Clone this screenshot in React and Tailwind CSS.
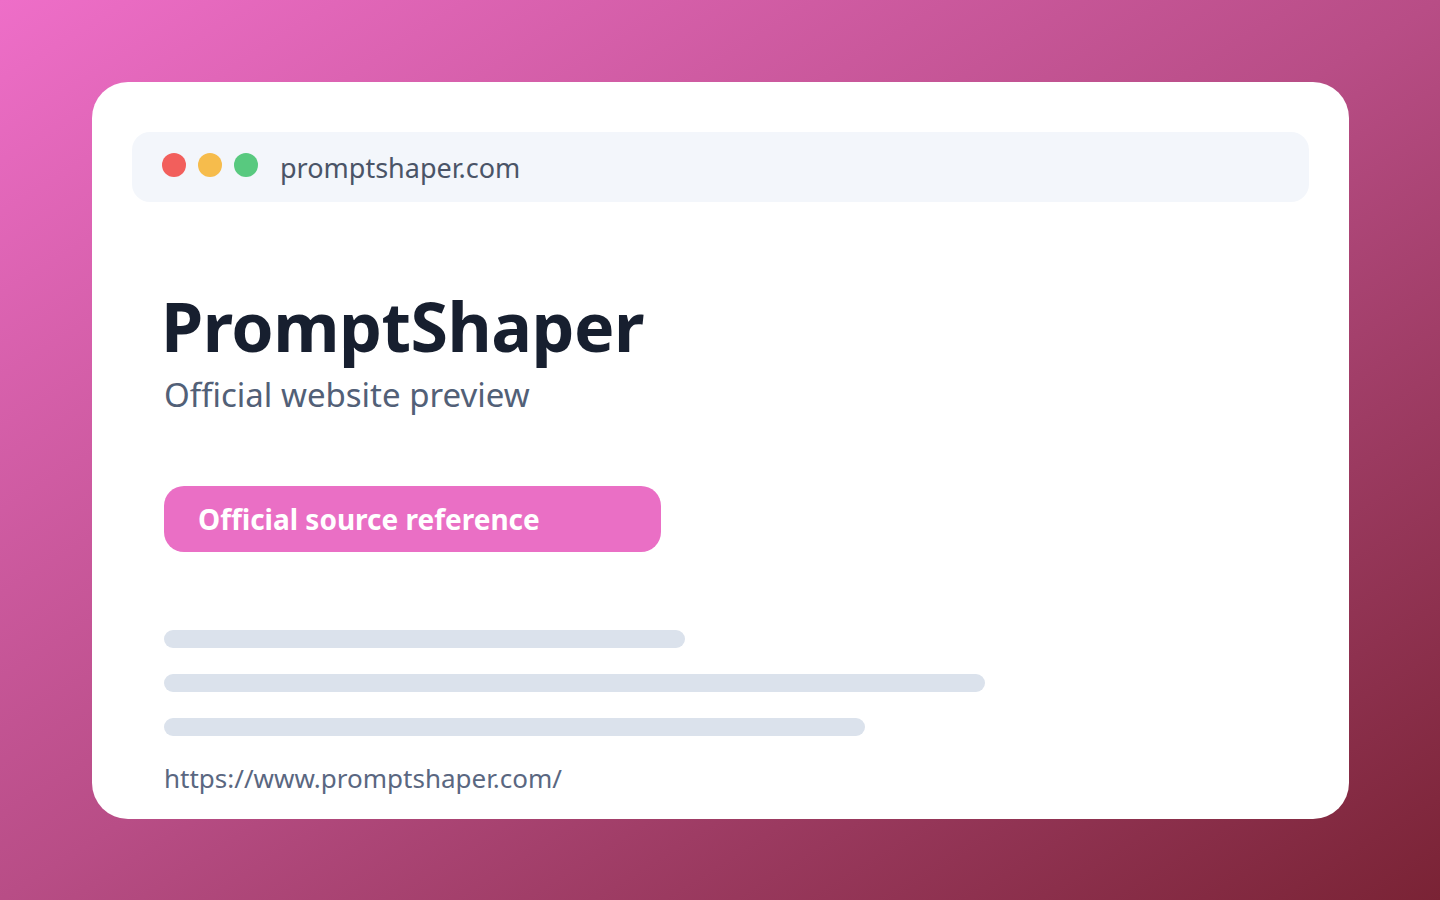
export default function App() {
  const bars = ["w-[521px]", "w-[821px]", "w-[701px]"];
  return (
    <div
      className="w-[1440px] h-[900px] bg-gradient-to-br from-[#ee6ec8] via-[#b84d86] to-[#7a2335] pt-[82px] pl-[92px]"
      style={{ fontFamily: '"Noto Sans", "Open Sans", sans-serif' }}
    >
      <div className="w-[1257px] h-[737px] bg-white rounded-[36px] px-[40px] pt-[50px]">
        <div className="h-[70px] bg-[#f3f6fb] rounded-[18px] flex items-center pl-[30px]">
          <div className="flex gap-[12px] -mt-[4px]">
            <span className="w-[24px] h-[24px] rounded-full bg-[#f25f5c]" />
            <span className="w-[24px] h-[24px] rounded-full bg-[#f6bc4c]" />
            <span className="w-[24px] h-[24px] rounded-full bg-[#58c97f]" />
          </div>
          <span className="ml-[22px] text-[27px] text-[#4a5467] leading-none">promptshaper.com</span>
        </div>
        <div className="pl-[32px]">
          <h1 className="mt-[90px] text-[68px] font-bold leading-none text-[#171f2f] -ml-[3px] tracking-[-0.5px]">
            PromptShaper
          </h1>
          <p className="mt-[18px] text-[33px] leading-none text-[#526077]">Official website preview</p>
          <div className="mt-[75px] w-[497px] h-[66px] rounded-[20px] bg-[#ea6fc5] flex items-center pl-[34px]">
            <span className="text-[28px] font-bold text-white leading-none">Official source reference</span>
          </div>
          <div className="mt-[78px] flex flex-col gap-[26px]">
            {bars.map((w, i) => (
              <div key={i} className={`${w} h-[18px] rounded-full bg-[#dbe2ec]`} />
            ))}
          </div>
          <p className="mt-[29px] text-[26px] leading-none text-[#5a6781]">https://www.promptshaper.com/</p>
        </div>
      </div>
    </div>
  );
}
